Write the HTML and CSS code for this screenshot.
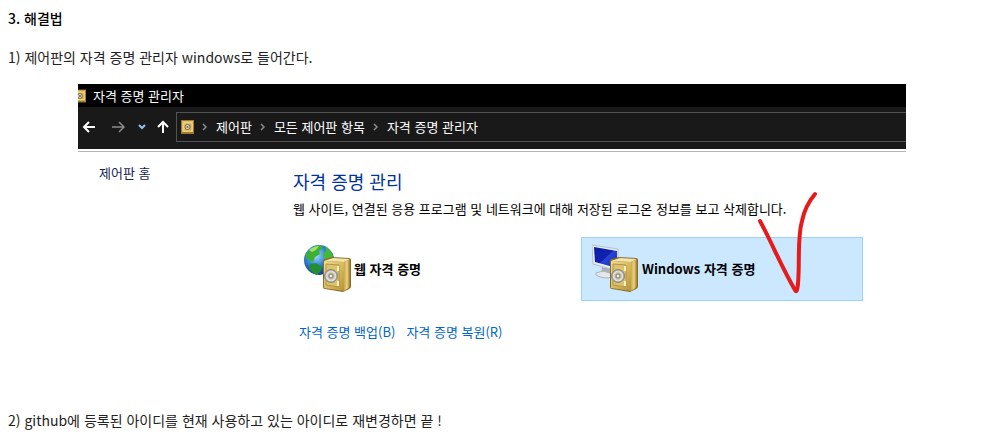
FILE: index.html
```html
<!DOCTYPE html>
<html lang="ko">
<head>
<meta charset="utf-8">
<title>자격 증명 관리자</title>
<link rel="stylesheet" href="styles.css">
</head>
<body>
<svg width="0" height="0" class="defs" aria-hidden="true">
  <defs>
    <linearGradient id="gold" x1="0" y1="0" x2="1" y2="1"><stop offset="0" stop-color="#f0dd92"/><stop offset=".5" stop-color="#d8bc61"/><stop offset="1" stop-color="#b8913a"/></linearGradient>
    <linearGradient id="side" x1="0" y1="0" x2="1" y2="0"><stop offset="0" stop-color="#c9a748"/><stop offset=".5" stop-color="#ead382"/><stop offset="1" stop-color="#9b772c"/></linearGradient>
    <radialGradient id="sea" cx=".4" cy=".35" r=".65"><stop offset="0" stop-color="#a2e0ff"/><stop offset=".5" stop-color="#3587d8"/><stop offset="1" stop-color="#153c91"/></radialGradient>
    <linearGradient id="screen" x1="0" y1="0" x2="1" y2="1"><stop offset="0" stop-color="#0a1fa0"/><stop offset=".5" stop-color="#1022b4"/><stop offset=".52" stop-color="#2846d4"/><stop offset="1" stop-color="#1226b8"/></linearGradient>
    <symbol id="safe" viewBox="0 0 30 37">
      <path d="M1 5q0-2 2-2l7-2 17 1q2 0 2 2v27q0 1-2 2l-6 3-18-3q-2 0-2-2z" fill="#8b6c2b"/>
      <path d="M2 5 11 2l17 1-6 3z" fill="#f4e6aa"/>
      <path d="m22 6 6-3v28l-6 4z" fill="url(#side)"/>
      <path d="m2 5 20 1v29L2 32z" fill="url(#gold)"/>
      <path d="m4 8 13 1v22L4 29z" fill="#dcc36c" stroke="#b3934a"/>
      <path d="M16 10v5m0 10v5" stroke="#fff3bd" stroke-width="2"/>
      <circle cx="9" cy="20" r="6.500" fill="#a9a9a5" stroke="#8a8a85"/>
      <circle cx="9" cy="20" r="4.500" fill="#c9b684" stroke="#e4e4e0" stroke-width="1.500"/>
      <path d="M9 15v10M4 20h10M6 17l6 6m0-6-6 6" stroke="#d2d2ce" stroke-width="1"/>
      <circle cx="9" cy="20" r="2" fill="#eee" stroke="#777"/>
    </symbol>
    <symbol id="vault" viewBox="0 0 13 14">
      <path d="M0 0h13v14H0z" fill="#a17b2d"/>
      <path d="M1 1h11v11H1z" fill="#e1c168"/>
      <path d="M3 3h8v8H3z" fill="#c8a64d" stroke="#f0dc95"/>
      <circle cx="6.500" cy="7" r="2.500" fill="#ddd" stroke="#866a2c"/>
      <circle cx="6.500" cy="7" r="1" fill="#666"/>
    </symbol>
    <symbol id="chevron" viewBox="0 0 6 8"><path d="m1 1 3 3-3 3" fill="none" stroke="#8a8a8a" stroke-width="1.500"/></symbol>
  </defs>
</svg>
<article class="post">
  <h2 class="step-title">3. 해결법</h2>
  <p class="step">1) 제어판의 자격 증명 관리자 windows로 들어간다.</p>
  <section class="window">
    <header class="titlebar"><svg class="title-icon"><use href="#vault"/></svg><span>자격 증명 관리자</span></header>
    <div class="toolbar">
      <button class="tool" aria-label="뒤로"><svg width="14" height="12" viewBox="0 0 14 12"><path d="M13 6H2m5-5L2 6l5 5" fill="none" stroke="#fff" stroke-width="2"/></svg></button>
      <button class="tool tool-forward" aria-label="앞으로"><svg width="14" height="12" viewBox="0 0 14 12"><path d="M0 6h12M7 1l5 5-5 5" fill="none" stroke="#8a8a8a" stroke-width="1.500"/></svg></button>
      <button class="tool tool-recent" aria-label="최근 위치"><svg width="8" height="6" viewBox="0 0 8 6"><path d="m1 1 3 3 3-3" fill="none" stroke="#8fc4ee" stroke-width="2"/></svg></button>
      <button class="tool tool-up" aria-label="위로"><svg width="12" height="14" viewBox="0 0 12 14"><path d="M6 13V2M1 7l5-5 5 5" fill="none" stroke="#fff" stroke-width="2"/></svg></button>
      <nav class="address" aria-label="주소">
        <svg class="address-icon"><use href="#vault"/></svg>
        <svg class="chevron"><use href="#chevron"/></svg><a href="#">제어판</a>
        <svg class="chevron"><use href="#chevron"/></svg><a href="#">모든 제어판 항목</a>
        <svg class="chevron"><use href="#chevron"/></svg><a href="#">자격 증명 관리자</a>
      </nav>
    </div>
    <div class="content">
      <aside class="sidebar"><a href="#">제어판 홈</a></aside>
      <div class="main">
        <h1 class="heading">자격 증명 관리</h1>
        <p class="description">웹 사이트, 연결된 응용 프로그램 및 네트워크에 대해 저장된 로그온 정보를 보고 삭제합니다.</p>
        <div class="tiles">
          <button class="tile">
            <svg width="48" height="50" viewBox="0 0 48 50">
              <circle cx="15" cy="16" r="15" fill="url(#sea)"/>
              <path d="M3 9Q7 2 16 1l3 3-4 3 1 3-5 3-2 5-5-2-3-4z" fill="#3fae35"/>
              <path d="M5 6q5-4 10-4l-3 4-4 2z" fill="#9be36c"/>
              <path d="M21 2q6 4 8 10l-1 7-4-3-4-1-1-5 3-3z" fill="#42ba36"/>
              <path d="m6 20 6-1 6 4-2 5-3 3q-5-2-8-6z" fill="#238f32"/>
              <use href="#safe" x="18" y="12" width="30" height="37"/>
            </svg><span>웹 자격 증명</span>
          </button>
          <button class="tile tile-selected">
            <svg width="48" height="50" viewBox="0 0 48 50">
              <path d="m10 23 9 2 1 5-11 1z" fill="#a9b1b8"/>
              <path d="m4 29 7-2 10 3-4 4Q8 34 4 31z" fill="#e4e8eb" stroke="#aab2b8"/>
              <path d="m0 1 26 4v22L1 20z" fill="#e8edf1" stroke="#b5c0ca"/>
              <path d="m2 3 23 4v17L3 18z" fill="url(#screen)"/>
              <use href="#safe" x="17" y="12" width="30" height="37"/>
            </svg><span>Windows 자격 증명</span>
          </button>
          <svg class="checkmark" width="62" height="108" viewBox="0 0 62 108" aria-hidden="true"><path d="M4 31C16 53 26 78 39 100q2 4 3-6C44 70 41 49 46 31Q49 16 59 4" fill="none" stroke="#e61b1b" stroke-width="4" stroke-linecap="round" stroke-linejoin="round"/></svg>
        </div>
        <div class="links"><a href="#">자격 증명 백업(B)</a><a href="#">자격 증명 복원(R)</a></div>
      </div>
    </div>
  </section>
  <p class="step">2) github에 등록된 아이디를 현재 사용하고 있는 아이디로 재변경하면 끝 !</p>
</article>
</body>
</html>
```
FILE: styles.css
```css
* { box-sizing: border-box; }
body {
  margin: 0;
  background: #fff;
  color: #000;
  font-family: "Noto Sans CJK KR", sans-serif;
}
svg { display: block; flex: none; }
a { color: inherit; text-decoration: none; }
button { border: 0; background: none; padding: 0; font: inherit; color: inherit; }
.defs { position: absolute; }
.post { padding: 7px 8px; }
.step-title, .step {
  margin: 0;
  font-size: 14px;
  line-height: 22px;
}
.step-title { font-weight: 500; margin-bottom: 17px; }
.step { font-weight: 400; color: #222; }
.window {
  margin: 16px 71px 18px 70px;
  font-size: 13px;
  line-height: 18px;
}
.titlebar {
  display: flex;
  align-items: center;
  gap: 7px;
  height: 23px;
  background: #000;
  color: #fff;
  overflow: hidden;
}
.title-icon { width: 12px; height: 14px; margin-left: -4px; }
.toolbar {
  display: flex;
  align-items: center;
  height: 42px;
  padding: 0 0 2px 4px;
  background: #191919;
  color: #fff;
}
.tool-forward { margin-left: 16px; }
.tool-recent { margin-left: 12px; }
.tool-up { margin-left: 11px; }
.address {
  display: flex;
  flex: 1;
  align-items: center;
  align-self: stretch;
  margin: 5px 0 5px 7px;
  padding-left: 4px;
  border: 1px solid #535353;
  border-right: 0;
}
.address-icon { width: 13px; height: 14px; }
.chevron { width: 6px; height: 8px; margin: 0 8px; }
.content {
  display: flex;
  margin-top: 2px;
  border-top: 1px solid #b5b5b5;
  padding: 12px 43px 50px 21px;
}
.sidebar { width: 194px; flex: none; color: #151c55; }
.main { flex: 1; min-width: 0; }
.heading {
  margin: 5px 0 7px;
  font-size: 18px;
  line-height: 24px;
  font-weight: 400;
  color: #003399;
}
.description { margin: 0; }
.tiles {
  position: relative;
  display: grid;
  grid-template-columns: 1fr 1fr;
  gap: 6px;
  margin-top: 19px;
}
.tile {
  display: flex;
  align-items: center;
  gap: 2px;
  height: 64px;
  padding-left: 10px;
  border: 1px solid transparent;
  font-weight: 700;
}
.tile-selected { background: #cce8ff; border-color: #99d1ff; }
.checkmark { position: absolute; right: 45px; bottom: 3px; }
.links {
  display: flex;
  gap: 11px;
  margin: 22px 0 0 6px;
  color: #0066cc;
}
```
